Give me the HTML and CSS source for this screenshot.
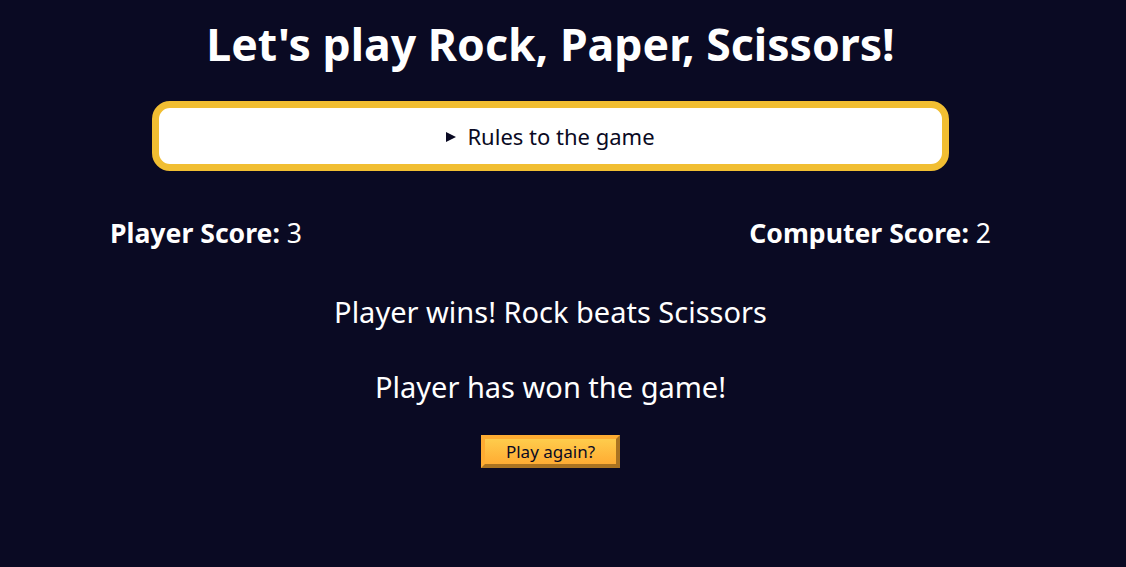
FILE: index.html
```html
<!DOCTYPE html>
<html lang="en">
<head>
<meta charset="utf-8">
<title>Rock, Paper, Scissors</title>
<link rel="stylesheet" href="styles.css">
</head>
<body>
  <h1 class="title">Let's play Rock, Paper, Scissors!</h1>
  <details class="rules-container">
    <summary>Rules to the game</summary>
  </details>
  <div class="score-container">
    <strong class="score-label">Player Score: <span class="score">3</span></strong>
    <strong class="score-label">Computer Score: <span class="score">2</span></strong>
  </div>
  <section class="results-container">
    <p class="results-msg">Player wins! Rock beats Scissors</p>
    <p class="winner-msg">Player has won the game!</p>
    <button class="btn reset-btn" type="button">Play again?</button>
  </section>
</body>
</html>
```

FILE: styles.css
```css
*, *::before, *::after {
  box-sizing: border-box;
  margin: 0;
  padding: 0;
}

body {
  background-color: #0a0a23;
  color: #ffffff;
  text-align: center;
  font-family: "Noto Sans", "DejaVu Sans", sans-serif;
  font-size: 22px;
  height: 567px;
  padding-right: 25px;
}

.title {
  font-size: 44.6px;
  font-weight: 700;
  line-height: 60px;
  padding-top: 14px;
  margin-bottom: 27px;
}

.rules-container {
  width: 797px;
  height: 70px;
  margin: 0 auto;
  border: 7px solid #f1be32;
  border-radius: 18px;
  background-color: #ffffff;
  color: #0a0a23;
  display: flex;
  align-items: center;
  justify-content: center;
}

.rules-container summary {
  font-size: 22px;
  line-height: 56px;
  cursor: pointer;
  list-style: none;
  display: flex;
  align-items: center;
}

.rules-container summary::-webkit-details-marker {
  display: none;
}

.rules-container summary::before {
  content: "";
  width: 0;
  height: 0;
  border-left: 10px solid #0a0a23;
  border-top: 5.5px solid transparent;
  border-bottom: 5.5px solid transparent;
  margin-right: 11px;
  margin-top: 2px;
}

.score-container {
  display: flex;
  justify-content: space-between;
  padding: 0 110px;
  margin-top: 44px;
  font-size: 26.6px;
  line-height: 36px;
}

.score-label {
  font-weight: 700;
}

.score {
  font-weight: 400;
}

.results-container {
  font-size: 29px;
  margin-top: 41px;
}

.results-msg {
  line-height: 40px;
}

.winner-msg {
  line-height: 40px;
  margin-top: 35px;
}

.btn {
  display: block;
  margin: 28px auto 0;
  width: 139px;
  height: 33px;
  font-family: "Noto Sans", "DejaVu Sans", sans-serif;
  font-size: 17px;
  color: #0a0a23;
  background-color: #feac32;
  background-image: linear-gradient(#fecc4c, #ffac33);
  border: 4px outset #feac32;
  cursor: pointer;
}
```
